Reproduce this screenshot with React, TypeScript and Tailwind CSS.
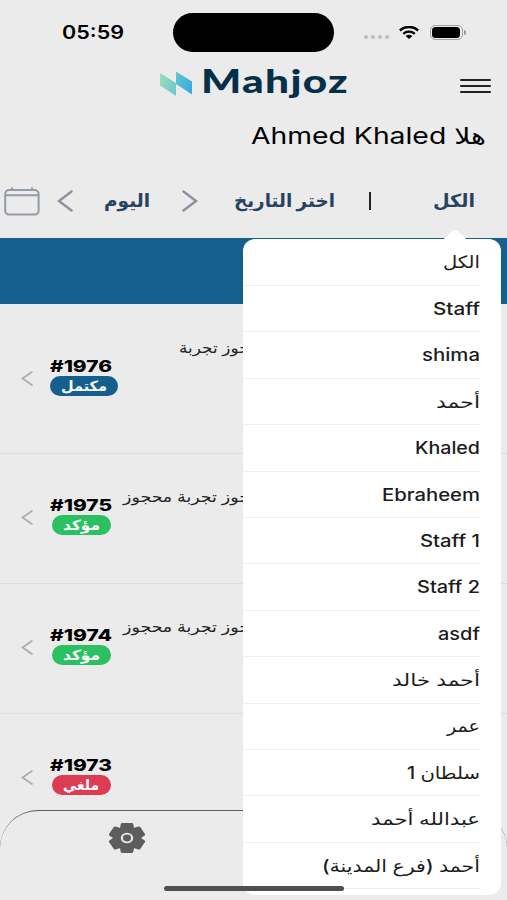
import { useLayoutEffect, useRef } from "react";

interface Booking {
  id: number;
  title: string;
  titleWidth: number;
  status: "completed" | "confirmed" | "cancelled";
}

const BOOKINGS: Booking[] = [
  { id: 1976, title: "محجوز تجربة", titleWidth: 91, status: "completed" },
  { id: 1975, title: "محجوز تجربة محجوز", titleWidth: 148, status: "confirmed" },
  { id: 1974, title: "محجوز تجربة محجوز", titleWidth: 148, status: "confirmed" },
  { id: 1973, title: "", titleWidth: 0, status: "cancelled" },
];

const STATUS_STYLES: Record<Booking["status"], string> = {
  completed: "bg-[#155f8f] w-[68px]",
  confirmed: "bg-[#2bc163] w-[59px]",
  cancelled: "bg-[#dc3d55] w-[59px]",
};

const STATUS_LABEL: Record<Booking["status"], { text: string; width: number }> = {
  completed: { text: "مكتمل", width: 46 },
  confirmed: { text: "مؤكد", width: 37 },
  cancelled: { text: "ملغي", width: 36 },
};

const STAFF = [
  { name: "الكل", width: 37 },
  { name: "Staff", width: 47 },
  { name: "shima", width: 58 },
  { name: "أحمد", width: 44 },
  { name: "Khaled", width: 65 },
  { name: "Ebraheem", width: 98 },
  { name: "Staff 1", width: 60 },
  { name: "Staff 2", width: 63 },
  { name: "asdf", width: 42 },
  { name: "أحمد خالد", width: 88 },
  { name: "عمر", width: 33 },
  { name: "سلطان 1", width: 73 },
  { name: "عبدالله أحمد", width: 109 },
  { name: "أحمد (فرع المدينة)", width: 158 },
];

// Wide label: the text is stretched horizontally to fill exactly `width`.
function Label({ text, width, className = "" }: { text: string; width: number; className?: string }) {
  const ref = useRef<HTMLSpanElement>(null);

  useLayoutEffect(() => {
    const el = ref.current;
    if (!el) return;
    el.style.transform = "none";
    el.style.transform = `scaleX(${width / el.getBoundingClientRect().width})`;
  }, [text, width]);

  return (
    <span dir="ltr" className={`block shrink-0 text-left ${className}`} style={{ width }}>
      <span ref={ref} dir="auto" className="inline-block origin-left whitespace-nowrap">
        {text}
      </span>
    </span>
  );
}

function Chevron({ className, flip }: { className: string; flip?: boolean }) {
  return (
    <svg viewBox="0 0 16 22" preserveAspectRatio="none" fill="none" stroke="currentColor" className={className}>
      <path d={flip ? "M1.5 1.5 14 11 1.5 20.5" : "M14.5 1.5 2 11l12.5 9.5"} strokeWidth="2.4" strokeLinecap="round" />
    </svg>
  );
}

function Gear({ className }: { className: string }) {
  return (
    <svg viewBox="-15 -15 30 30" preserveAspectRatio="none" fill="currentColor" className={className}>
      <circle r="11.2" />
      {[0, 60, 120].map((angle) => (
        <path
          key={angle}
          transform={`rotate(${angle})`}
          d="M-4-15H4Q5-15 5.2-14L6-9V9L5.2 14Q5 15 4 15H-4Q-5 15-5.2 14L-6 9V-9L-5.2-14Q-5-15-4-15z"
        />
      ))}
      <circle r="4.3" fill="none" stroke="#ebebeb" strokeWidth="1.8" />
    </svg>
  );
}

function StatusBar() {
  return (
    <div className="flex h-[64px] items-center">
      <Label text="05:59" width={62} className="mt-px ml-[62px] font-['Inter'] text-[18.5px] font-semibold text-black" />
      <div className="ml-[49px] h-[39px] w-[161px] rounded-full bg-black" />
      <div className="mt-[9px] ml-[30px] flex gap-[3px]">
        {[0, 1, 2, 3].map((i) => (
          <span key={i} className="h-1 w-1 rounded-full bg-[#bdbdbd]" />
        ))}
      </div>
      <svg viewBox="0 0 22 14" fill="none" stroke="#000" className="ml-[9px] h-[13px] w-[22px]">
        <path d="M1.2 4.8C6.8-.3 15.2-.3 20.8 4.8" strokeWidth="2.7" />
        <path d="M4.8 8.4c3.6-3.1 8.8-3.1 12.4 0" strokeWidth="2.6" />
        <path d="M11 14 7.4 10.9c2-1.8 5.2-1.8 7.2 0z" fill="#000" stroke="none" />
      </svg>
      <div className="ml-[10px] h-[15px] w-[33px] rounded-[5px] border border-[#a3a3a3] p-[1px]">
        <div className="h-full w-[28px] rounded-[3.5px] bg-black" />
      </div>
      <span className="ml-px h-[5px] w-[2px] rounded-r-full bg-[#999]" />
    </div>
  );
}

function Logo() {
  return (
    <div className="flex">
      <svg viewBox="0 0 32 26" className="mt-[7px] h-[26px] w-[32px]">
        <defs>
          <linearGradient id="mark" x1="0" x2="1" y1="0" y2="0.3">
            <stop offset="0" stopColor="#9adcbb" />
            <stop offset="1" stopColor="#6fcdca" />
          </linearGradient>
          <linearGradient id="mark2" x1="0" x2="1" y1="0" y2="0.6">
            <stop offset="0" stopColor="#62c8cb" />
            <stop offset="1" stopColor="#3fa9df" />
          </linearGradient>
        </defs>
        <path d="M0 2 16 12v13L0 14.5z" fill="url(#mark)" />
        <path d="M16 .5 32 10.5v13L16 13z" fill="url(#mark2)" />
      </svg>
      <Label
        text="Mahjoz"
        width={148}
        className="-mt-[2px] ml-[9px] font-['Lato'] text-[33px] leading-[36px] font-black tracking-[1px] text-[#06304a]"
      />
    </div>
  );
}

function StaffMenu() {
  return (
    <div className="absolute top-[239px] left-[243px] h-[656px] w-[258px] rounded-[12px] bg-white">
      <svg viewBox="0 0 24 12" className="absolute -top-[10px] left-[200px] h-[12px] w-[24px]">
        <path d="M0 12 2 8.5 9 2.2Q12 0 15 2.2L22 8.5l2 3.5z" fill="#fff" />
      </svg>
      <ul>
        {STAFF.map((s) => (
          <li
            key={s.name}
            className="mr-[21px] flex h-[46.4px] items-center justify-end border-b border-[#efefef] pt-[2px] font-['Inter','DejaVu_Sans',sans-serif] text-[17px] font-medium text-[#1c1c1c] first:h-[47px]"
          >
            <Label text={s.name} width={s.width} />
          </li>
        ))}
      </ul>
    </div>
  );
}

export default function App() {
  return (
    <div className="relative flex h-[900px] w-[507px] flex-col overflow-hidden bg-[#ebebeb] font-['Inter','DejaVu_Sans',sans-serif]">
      <StatusBar />

      <header className="flex h-[54px] justify-between pr-[16px] pl-[160px]">
        <Logo />
        <div className="mt-[15px] flex w-[31px] flex-col gap-[4px]">
          <span className="h-[2px] rounded bg-[#222]" />
          <span className="h-[2px] rounded bg-[#222]" />
          <span className="h-[2px] rounded bg-[#222]" />
        </div>
      </header>

      <div className="flex h-[36px] items-center justify-end pt-px pr-[21px] text-[23px] text-black">
        <Label text="هلا Ahmed Khaled" width={235} />
      </div>

      <div className="flex h-[84px] items-center pt-[10px] pl-[4px] text-[18px] font-bold text-[#28425f]">
        <svg viewBox="0 0 36 29" fill="none" stroke="#929ba7" strokeWidth="2" className="h-[29px] w-[36px]">
          <rect x="1.2" y="3" width="33.4" height="24.6" rx="4" />
          <path d="M1 8.2h34M8 .5V3M28 .5V3" />
        </svg>
        <Chevron className="ml-[17px] h-[22px] w-[16px] text-[#8b929c]" />
        <Label text="اليوم" width={46} className="-mt-[2px] ml-[31px]" />
        <Chevron flip className="ml-[32px] h-[22px] w-[16px] text-[#8b929c]" />
        <Label text="اختر التاريخ" width={101} className="-mt-[2px] ml-[36px]" />
        <span className="ml-[34px] h-[18px] w-[2px] bg-[#222]" />
        <Label text="الكل" width={42} className="-mt-[2px] ml-[62px]" />
      </div>

      <div className="h-[65.5px] shrink-0 bg-[#155f8f]" />

      <ul className="shrink-0">
        {BOOKINGS.map((b, i) => (
          <li
            key={b.id}
            className={`flex items-start border-b border-[#dedede] ${i === 0 ? "h-[150px] pt-[53px]" : "h-[130px] pt-[42px]"}`}
          >
            <Chevron className="mt-[14px] ml-[21px] h-[15px] w-[12px] text-[#adadad]" />
            <div className="ml-[17px] flex w-[68px] flex-col items-center">
              <Label
                text={`#${b.id}`}
                width={62}
                className="h-[19px] -translate-x-[3px] text-[16px] leading-[18px] font-extrabold text-black"
              />
              <div
                className={`flex h-[20px] items-center justify-center rounded-full text-[14px] leading-[20px] font-bold text-white ${STATUS_STYLES[b.status]} ${i === 0 ? "" : "-translate-x-[3px]"}`}
              >
                <Label text={STATUS_LABEL[b.status].text} width={STATUS_LABEL[b.status].width} />
              </div>
            </div>
            {b.title && (
              <Label
                text={b.title}
                width={b.titleWidth}
                className={`text-[15px] leading-[20px] text-[#222] ${i === 0 ? "-mt-[19px] ml-[61px]" : "-mt-[9px] ml-[5px]"}`}
              />
            )}
          </li>
        ))}
      </ul>

      <nav className="absolute inset-x-0 bottom-0 h-[90px] rounded-[38px] border-t border-[#53606f] bg-[#ebebeb] pt-[12px] pl-[109px]">
        <Gear className="h-[30px] w-[36px] text-[#5d5d5d]" />
      </nav>

      <StaffMenu />
      <div className="absolute bottom-[9px] left-[164px] h-[5px] w-[180px] rounded-full bg-[#505050]" />
    </div>
  );
}
